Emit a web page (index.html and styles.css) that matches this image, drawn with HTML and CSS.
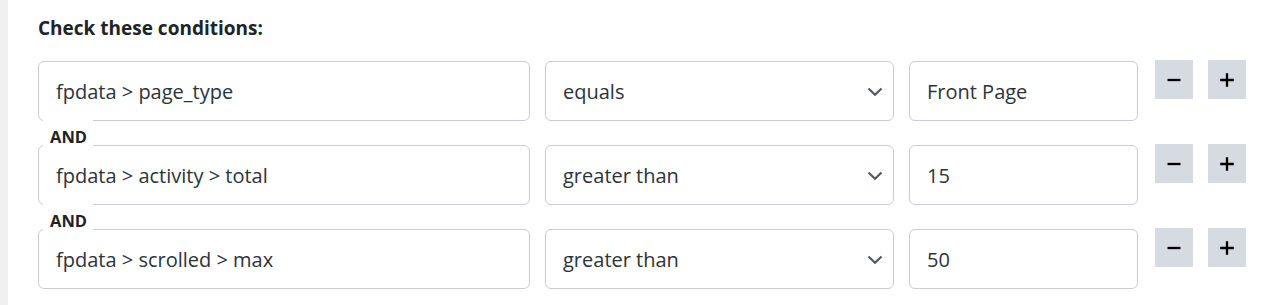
FILE: index.html
```html
<!DOCTYPE html>
<html lang="en">
<head>
<meta charset="utf-8">
<title>Conditions</title>
<link rel="stylesheet" href="styles.css">
</head>
<body>
<div class="panel">
  <h3 class="title">Check these conditions:</h3>
  <div class="conditions">
    <div class="row">
      <input class="field" type="text" value="fpdata &gt; page_type" readonly>
      <div class="select-wrap">
        <select class="field select"><option>equals</option></select>
        <svg class="chevron" width="16" height="10" viewBox="0 0 16 10"><path d="M1.5 1.5 L8 7.8 L14.5 1.5" fill="none" stroke="#50575e" stroke-width="2.1"/></svg>
      </div>
      <input class="field" type="text" value="Front Page" readonly>
      <div class="buttons">
        <button class="btn" type="button" aria-label="Remove"><svg width="16" height="16" viewBox="0 0 16 16"><path d="M1.5 8 H14.5" stroke="#000" stroke-width="2.3"/></svg></button>
        <button class="btn" type="button" aria-label="Add"><svg width="16" height="16" viewBox="0 0 16 16"><path d="M8 1.2 V14.8 M1.2 8 H14.8" stroke="#000" stroke-width="2.3"/></svg></button>
      </div>
    </div>
    <div class="joiner"><span class="and">AND</span></div>
    <div class="row">
      <input class="field" type="text" value="fpdata &gt; activity &gt; total" readonly>
      <div class="select-wrap">
        <select class="field select"><option>greater than</option></select>
        <svg class="chevron" width="16" height="10" viewBox="0 0 16 10"><path d="M1.5 1.5 L8 7.8 L14.5 1.5" fill="none" stroke="#50575e" stroke-width="2.1"/></svg>
      </div>
      <input class="field" type="text" value="15" readonly>
      <div class="buttons">
        <button class="btn" type="button" aria-label="Remove"><svg width="16" height="16" viewBox="0 0 16 16"><path d="M1.5 8 H14.5" stroke="#000" stroke-width="2.3"/></svg></button>
        <button class="btn" type="button" aria-label="Add"><svg width="16" height="16" viewBox="0 0 16 16"><path d="M8 1.2 V14.8 M1.2 8 H14.8" stroke="#000" stroke-width="2.3"/></svg></button>
      </div>
    </div>
    <div class="joiner"><span class="and">AND</span></div>
    <div class="row">
      <input class="field" type="text" value="fpdata &gt; scrolled &gt; max" readonly>
      <div class="select-wrap">
        <select class="field select"><option>greater than</option></select>
        <svg class="chevron" width="16" height="10" viewBox="0 0 16 10"><path d="M1.5 1.5 L8 7.8 L14.5 1.5" fill="none" stroke="#50575e" stroke-width="2.1"/></svg>
      </div>
      <input class="field" type="text" value="50" readonly>
      <div class="buttons">
        <button class="btn" type="button" aria-label="Remove"><svg width="16" height="16" viewBox="0 0 16 16"><path d="M1.5 8 H14.5" stroke="#000" stroke-width="2.3"/></svg></button>
        <button class="btn" type="button" aria-label="Add"><svg width="16" height="16" viewBox="0 0 16 16"><path d="M8 1.2 V14.8 M1.2 8 H14.8" stroke="#000" stroke-width="2.3"/></svg></button>
      </div>
    </div>
  </div>
</div>
</body>
</html>
```
FILE: styles.css
```css
html, body {
  margin: 0;
  padding: 0;
  background: #f0f0f1;
  height: 305px;
  overflow: hidden;
}
body {
  padding-left: 8px;
  font-family: "Open Sans", "Noto Sans", sans-serif;
  color: #2c3338;
}
.panel {
  background: #fff;
  height: 305px;
  padding: 14px 0 0 30px;
  box-sizing: border-box;
}
.title {
  margin: 0 0 19px;
  font-size: 19px;
  line-height: 28px;
  font-weight: 700;
  color: #1d2327;
}
.conditions {
  display: flex;
  flex-direction: column;
}
.row {
  display: grid;
  grid-template-columns: 492px 349px 229px auto;
  column-gap: 15px;
  align-items: start;
}
.field {
  box-sizing: border-box;
  width: 100%;
  height: 60px;
  margin: 0;
  padding: 0 17px;
  border: 1px solid #c8ccd6;
  border-radius: 6px;
  background: #fff;
  font-family: inherit;
  font-size: 20px;
  color: #2c3338;
  outline: none;
}
.select-wrap {
  position: relative;
}
.select {
  appearance: none;
  -webkit-appearance: none;
  padding-right: 40px;
}
.chevron {
  position: absolute;
  right: 11px;
  top: 26px;
  pointer-events: none;
}
.buttons {
  display: flex;
  gap: 15px;
  margin-left: 2px;
  margin-top: -1px;
}
.btn {
  width: 38px;
  height: 39px;
  padding: 0;
  border: 0;
  border-radius: 0;
  background: #d6dae1;
  display: flex;
  align-items: center;
  justify-content: center;
}
.joiner {
  height: 24px;
  position: relative;
  z-index: 1;
}
.and {
  display: inline-block;
  margin: -2px 0 0 5px;
  padding: 7px 6px 0 7px;
  height: 21px;
  line-height: 21px;
  background: #fff;
  font-size: 16.5px;
  font-weight: 700;
  color: #1d2327;
}
```
